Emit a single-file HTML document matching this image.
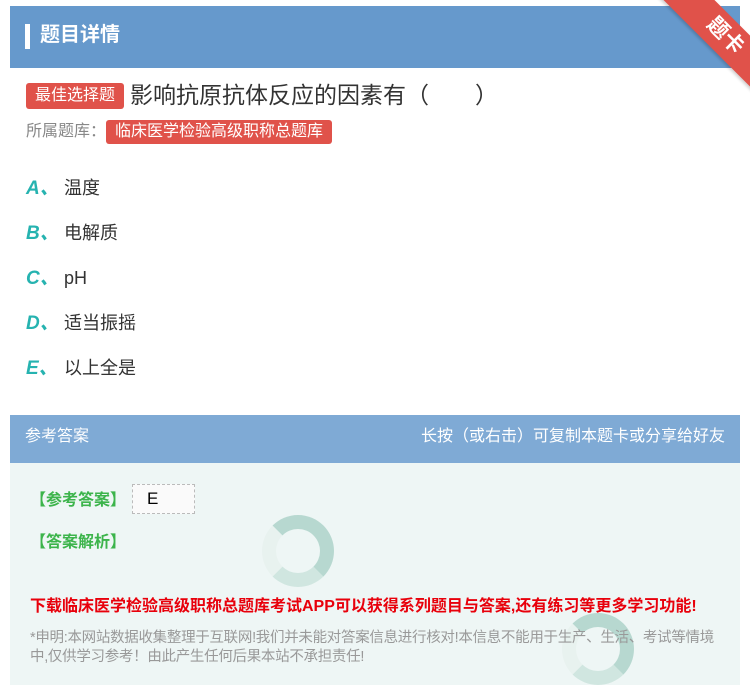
<!DOCTYPE html>
<html><head><meta charset="utf-8"><style>
*{margin:0;padding:0;box-sizing:border-box}
body{width:750px;height:685px;background:#fff;font-family:"Liberation Sans","Noto Sans CJK SC",sans-serif;position:relative;overflow:hidden}
.hd{position:absolute;left:10px;top:6px;width:730px;height:62px;background:#6699cc}
.hd .bar{position:absolute;left:15px;top:18px;width:5px;height:25px;background:#fff}
.hd .t{position:absolute;left:30px;top:16px;color:#fff;font-size:20px;font-weight:bold;line-height:26px}
.rib{position:absolute;width:150px;height:36px;background:#e0524a;transform:rotate(45deg);left:650px;top:18px;color:#fff;font-size:21px;text-align:center;line-height:36px;font-weight:bold;box-shadow:0 2px 3px rgba(0,0,0,.2)}
.q{position:absolute;left:26px;top:80px;font-size:23px;color:#333;line-height:30px}
.tag{display:inline-block;background:#e0524a;color:#fff;font-size:16px;padding:0 9px;height:26px;line-height:26px;border-radius:3px;vertical-align:3px;margin-right:6px}
.lib{position:absolute;left:26px;top:120px;font-size:16px;color:#888;line-height:24px}
.lib .tag{font-size:16px;height:24px;line-height:24px;vertical-align:0;margin-left:0}
.op{position:absolute;left:26px;font-size:18px;color:#333;line-height:24px}
.op b{color:#26b3b0;font-style:italic;font-size:19px;display:inline-block;width:38px}
.ah{position:absolute;left:10px;top:415px;width:730px;height:48px;background:#7faad5;color:#fff;font-size:16px;line-height:44px;padding:0 15px}
.ah span{float:right}
.ab{position:absolute;left:10px;top:463px;width:730px;height:222px;background:#eef6f5}
.g{position:absolute;left:20px;color:#3cb44b;font-size:16px;font-weight:bold}
.red{position:absolute;left:30px;top:592px;color:#e8000b;font-size:16px;font-weight:bold;letter-spacing:0;white-space:nowrap}
.dis{position:absolute;left:30px;top:629px;width:690px;color:#999;font-size:14.5px;line-height:19px;letter-spacing:-0.3px}
.logo{position:absolute;width:72px;height:72px;border-radius:50%;border:14px solid #b7d8d0;border-left-color:#e8f2ef;border-bottom-color:#d0e6e0}
</style></head><body>
<div class="hd"><div class="bar"></div><div class="t">题目详情</div></div>
<div class="rib">题卡</div>
<div class="q"><span class="tag">最佳选择题</span>影响抗原抗体反应的因素有（　　）</div>
<div class="lib">所属题库：<span class="tag">临床医学检验高级职称总题库</span></div>
<div class="op" style="top:176px"><b>A、</b>温度</div>
<div class="op" style="top:221px"><b>B、</b>电解质</div>
<div class="op" style="top:266px"><b>C、</b>pH</div>
<div class="op" style="top:311px"><b>D、</b>适当振摇</div>
<div class="op" style="top:356px"><b>E、</b>以上全是</div>
<div class="ah">参考答案<span>长按（或右击）可复制本题卡或分享给好友</span></div>
<div class="ab">
<div class="logo" style="left:252px;top:52px"></div>
<div class="logo" style="left:552px;top:150px"></div>
<div class="g" style="top:23px">【参考答案】</div>
<div style="position:absolute;left:122px;top:21px;width:63px;height:30px;background:#fafafa;border:1px dashed #bbb;font-size:17px;padding-left:14px;line-height:28px">E</div>
<div class="g" style="top:65px">【答案解析】</div>
</div>
<div class="red">下载临床医学检验高级职称总题库考试APP可以获得系列题目与答案,还有练习等更多学习功能!</div>
<div class="dis">*申明:本网站数据收集整理于互联网!我们并未能对答案信息进行核对!本信息不能用于生产、生活、考试等情境中,仅供学习参考！由此产生任何后果本站不承担责任!</div>
</body></html>
